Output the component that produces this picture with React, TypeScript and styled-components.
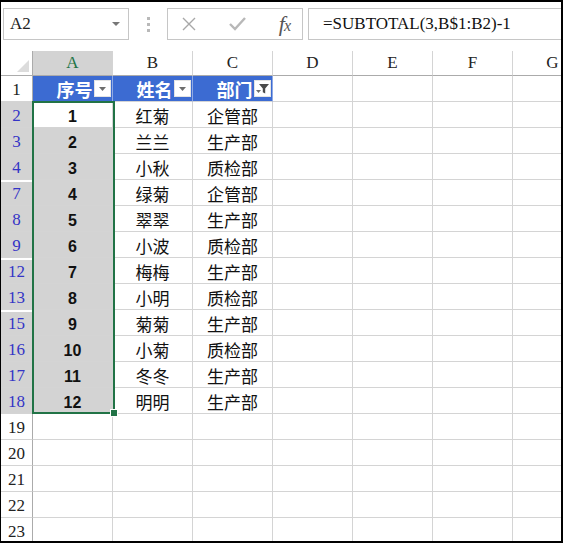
import React from 'react';
import styled, { createGlobalStyle } from 'styled-components';

const GlobalStyle = createGlobalStyle`
    html, body {
        margin: 0;
        padding: 0;
        background: #fff;
    }
`;

const SERIF = '"Liberation Serif", "Noto Sans CJK SC", serif';
const SANS = '"Liberation Sans", "Noto Sans CJK SC", sans-serif';
const CJK = '"Noto Sans CJK SC", "Liberation Sans", sans-serif';

const GRID_LINE = '#d4d4d4';
const HEAD_LINE = '#ababab';
const SEL_GRAY = '#d3d3d3';
const GREEN = '#217346';
const TABLE_BLUE = '#3c6bd2';

const Frame = styled.div`
    width: 563px;
    height: 543px;
    box-sizing: border-box;
    border: 2px solid #000;
    border-left-width: 1px;
    overflow: hidden;
    background: #fff;
    display: flex;
    flex-direction: column;
`;

const Toolbar = styled.div`
    height: 49px;
    flex: none;
    display: flex;
    align-items: flex-start;
    padding: 6px 0 0 2px;
    box-sizing: border-box;
`;

const NameBox = styled.div`
    width: 126px;
    height: 32px;
    box-sizing: border-box;
    border: 1px solid #c6c6c6;
    display: flex;
    align-items: center;
    justify-content: space-between;
    padding: 0 8px 0 6px;
    font-family: ${SERIF};
    font-size: 17px;
    color: #222;
`;

const Caret = styled.span`
    width: 0;
    height: 0;
    border-left: 4px solid transparent;
    border-right: 4px solid transparent;
    border-top: 4px solid #777;
`;

const Dots = styled.div`
    width: 38px;
    height: 32px;
    display: flex;
    flex-direction: column;
    align-items: center;
    justify-content: center;
    gap: 3px;

    & > span {
        width: 3px;
        height: 3px;
        background: #b9b9b9;
    }
`;

const ButtonBox = styled.div`
    width: 136px;
    height: 32px;
    box-sizing: border-box;
    border: 1px solid #c6c6c6;
    display: flex;
    align-items: center;
    justify-content: space-between;
    padding: 0 12px 0 14px;
`;

const Fx = styled.span`
    font-family: ${SERIF};
    font-style: italic;
    font-size: 22px;
    color: #555;
    letter-spacing: -1px;
    line-height: 1;

    & > small {
        font-size: 16px;
    }
`;

const FormulaBox = styled.div`
    flex: 1;
    height: 32px;
    margin-left: 5px;
    box-sizing: border-box;
    border: 1px solid #c6c6c6;
    border-right: none;
    display: flex;
    align-items: center;
    padding-left: 14px;
    font-family: ${SERIF};
    font-size: 17px;
    color: #111;
    white-space: nowrap;
`;

const Sheet = styled.div`
    position: relative;
    display: grid;
    grid-template-columns: 32px repeat(7, 80px);
    grid-template-rows: 25px;
    grid-auto-rows: 26px;
`;

const Corner = styled.div`
    border-right: 1px solid ${HEAD_LINE};
    border-bottom: 1px solid ${HEAD_LINE};
    display: flex;
    align-items: flex-end;
    justify-content: flex-end;
    padding: 0 3px 3px 0;
`;

const ColHead = styled.div<{ $sel?: boolean }>`
    background: ${({ $sel }) => ($sel ? SEL_GRAY : '#fff')};
    color: ${({ $sel }) => ($sel ? GREEN : '#222')};
    border-right: 1px solid ${GRID_LINE};
    border-bottom: 1px solid ${HEAD_LINE};
    display: flex;
    align-items: center;
    justify-content: center;
    font-family: ${SERIF};
    font-size: 17px;
`;

const RowHead = styled.div<{ $sel?: boolean; $gap?: boolean }>`
    background: ${({ $sel }) => ($sel ? SEL_GRAY : '#fff')};
    color: ${({ $sel }) => ($sel ? '#3434c6' : '#222')};
    border-right: 1px solid ${HEAD_LINE};
    border-bottom: 1px solid ${GRID_LINE};
    box-shadow: ${({ $gap }) => ($gap ? 'inset 0 2px 0 #fff' : 'none')};
    display: flex;
    align-items: center;
    justify-content: center;
    padding-top: 2px;
    box-sizing: border-box;
    font-family: ${SERIF};
    font-size: 17px;
`;

const Cell = styled.div<{ $sel?: boolean; $num?: boolean }>`
    background: ${({ $sel }) => ($sel ? SEL_GRAY : '#fff')};
    border-right: 1px solid ${GRID_LINE};
    border-bottom: 1px solid ${GRID_LINE};
    display: flex;
    align-items: center;
    justify-content: center;
    font-family: ${({ $num }) => ($num ? SANS : CJK)};
    font-weight: ${({ $num }) => ($num ? 700 : 400)};
    font-size: ${({ $num }) => ($num ? '16px' : '17px')};
    color: #111;
    padding-top: ${({ $num }) => ($num ? '4px' : '1px')};
    box-sizing: border-box;
`;

const TableHead = styled.div`
    position: relative;
    background: ${TABLE_BLUE};
    border-right: 1px solid #8fa9e4;
    border-bottom: 1px solid ${GRID_LINE};
    display: flex;
    align-items: center;
    justify-content: center;
    padding-left: 4px;
    font-family: ${CJK};
    font-weight: 700;
    font-size: 18px;
    color: #fff;
`;

const DropButton = styled.span`
    position: absolute;
    right: 1px;
    top: 4px;
    width: 17px;
    height: 17px;
    background: #fff;
    border: 1px solid #e4e4e4;
    box-sizing: border-box;
    display: flex;
    align-items: center;
    justify-content: center;
`;

const Selection = styled.div`
    position: absolute;
    left: 31px;
    top: 50px;
    width: 83px;
    height: 313px;
    box-sizing: border-box;
    border: 2px solid ${GREEN};
    pointer-events: none;
`;

const FillHandle = styled.span`
    position: absolute;
    right: -5px;
    bottom: -5px;
    width: 6px;
    height: 6px;
    background: ${GREEN};
    border: 1px solid #fff;
`;

const COLS = ['A', 'B', 'C', 'D', 'E', 'F', 'G'];

const DATA: [number, string, string, number][] = [
    [1, '红菊', '企管部', 2],
    [2, '兰兰', '生产部', 3],
    [3, '小秋', '质检部', 4],
    [4, '绿菊', '企管部', 7],
    [5, '翠翠', '生产部', 8],
    [6, '小波', '质检部', 9],
    [7, '梅梅', '生产部', 12],
    [8, '小明', '质检部', 13],
    [9, '菊菊', '生产部', 15],
    [10, '小菊', '质检部', 16],
    [11, '冬冬', '生产部', 17],
    [12, '明明', '生产部', 18],
];

const Triangle = () => (
    <svg width="7" height="4" viewBox="0 0 7 4">
        <path d="M0 0 H7 L3.5 4 Z" fill="#6d6d6d" />
    </svg>
);

const FilterIcon = () => (
    <svg width="15" height="15" viewBox="0 0 15 15">
        <path d="M4 3 H14 L10.2 7.5 V12.5 L7.8 11.2 V7.5 Z" fill="#4a4a4a" />
        <path d="M1 9 H6 L3.5 12 Z" fill="#6d6d6d" />
    </svg>
);

export default function App() {
    return (
        <>
            <GlobalStyle />
            <Frame>
                <Toolbar>
                    <NameBox>
                        A2
                        <Caret />
                    </NameBox>
                    <Dots>
                        <span />
                        <span />
                        <span />
                    </Dots>
                    <ButtonBox>
                        <svg width="14" height="14" viewBox="0 0 14 14">
                            <path d="M1 1 L13 13 M13 1 L1 13" stroke="#a8a8a8" strokeWidth="1.4" />
                        </svg>
                        <svg width="17" height="14" viewBox="0 0 17 14">
                            <path d="M1 7 L6 12 L16 1" stroke="#b8b8b8" strokeWidth="2.4" fill="none" />
                        </svg>
                        <Fx>
                            f<small>x</small>
                        </Fx>
                    </ButtonBox>
                    <FormulaBox>=SUBTOTAL(3,B$1:B2)-1</FormulaBox>
                </Toolbar>

                <Sheet>
                    <Corner>
                        <svg width="12" height="12" viewBox="0 0 12 12">
                            <path d="M12 0 V12 H0 Z" fill="#dcdcdc" />
                        </svg>
                    </Corner>
                    {COLS.map((c) => (
                        <ColHead key={c} $sel={c === 'A'}>
                            {c}
                        </ColHead>
                    ))}

                    <RowHead>1</RowHead>
                    <TableHead>
                        序号
                        <DropButton>
                            <Triangle />
                        </DropButton>
                    </TableHead>
                    <TableHead>
                        姓名
                        <DropButton>
                            <Triangle />
                        </DropButton>
                    </TableHead>
                    <TableHead>
                        部门
                        <DropButton>
                            <FilterIcon />
                        </DropButton>
                    </TableHead>
                    <Cell />
                    <Cell />
                    <Cell />
                    <Cell />

                    {DATA.map(([n, name, dept, row], i) => {
                        const prev = i > 0 ? DATA[i - 1][3] : row - 1;
                        return (
                            <React.Fragment key={row}>
                                <RowHead $sel $gap={row - prev > 1}>
                                    {row}
                                </RowHead>
                                <Cell $num $sel={i > 0}>
                                    {n}
                                </Cell>
                                <Cell>{name}</Cell>
                                <Cell>{dept}</Cell>
                                <Cell />
                                <Cell />
                                <Cell />
                                <Cell />
                            </React.Fragment>
                        );
                    })}

                    {[19, 20, 21, 22, 23].map((row) => (
                        <React.Fragment key={row}>
                            <RowHead>{row}</RowHead>
                            {COLS.map((c) => (
                                <Cell key={c} />
                            ))}
                        </React.Fragment>
                    ))}
                    <RowHead />
                    {COLS.map((c) => (
                        <Cell key={c} />
                    ))}

                    <Selection>
                        <FillHandle />
                    </Selection>
                </Sheet>
            </Frame>
        </>
    );
}
